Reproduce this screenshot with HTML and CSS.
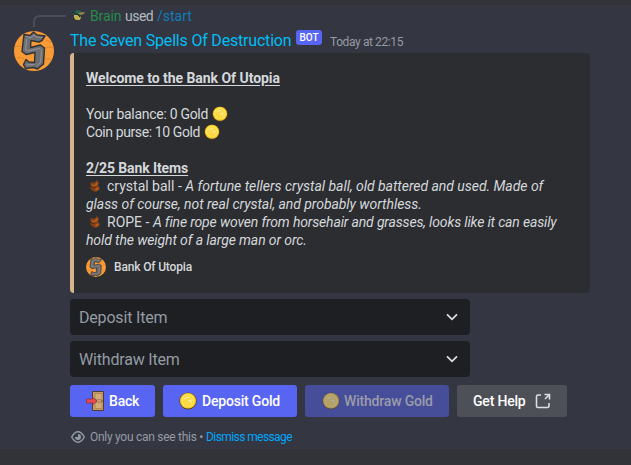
FILE: index.html
```
<!DOCTYPE html>
<html lang="en">
<head>
<meta charset="utf-8">
<title>Bank Of Utopia</title>
<link rel="stylesheet" href="styles.css">
</head>
<body>
<svg class="defs" width="0" height="0" aria-hidden="true">
  <symbol id="logo" viewBox="0 0 40 40">
    <circle cx="20" cy="20" r="20" fill="#f99a35"/>
    <path d="M1 16q5-2 8 0M31 17q5-2 8 0M31 28q4-1 6 1M3 27q4-1 7 1M32 9l5 2" fill="none" stroke="#d98029" stroke-width=".8"/>
    <path d="M10 3.500l6 1 3.500-3.500 3.500 3 8 1-3 4.500-3 1.500-8-1.500-.5 7 10-2.500 4 3-1 16-6 5-4-1.500-8 1-2-4 2.500-5 3 2.500 5.500.5.500-10-9 2-4-3z" fill="#6d6e71" stroke="#303236" stroke-width="1.400" stroke-linejoin="round"/>
    <path d="M12 5.500l5 1 3-2.500 3 2 5 .500M12.500 8l-1 11 2 1 12-2.500 2 2-1 12-3.500 3M12.500 34l8-.500" fill="none" stroke="#96979a" stroke-width="1"/>
  </symbol>
  <symbol id="coin" viewBox="0 0 18 20" preserveAspectRatio="none">
    <ellipse cx="9" cy="10" rx="8.700" ry="9.500" fill="#5a4520"/>
    <ellipse cx="9" cy="9.700" rx="8" ry="8.700" fill="#f9cd32"/>
    <ellipse cx="9" cy="9.500" rx="6.600" ry="7.200" fill="#ffe74f"/>
    <ellipse cx="9" cy="9.700" rx="5.200" ry="5.800" fill="#fcd746"/>
    <path d="M5.500 8q2-3 5-2M9 10l3-1 0 3" fill="none" stroke="#fff09a" stroke-width="1.200"/>
  </symbol>
  <symbol id="bag" viewBox="0 0 12 12">
    <path d="M1 3l3-1 1 1 3-3 2 3-1 2 2 4-4 3-3-1-3-3 1-2z" fill="#82401a"/>
    <path d="M2 4l3 1 3-3 1 2-3 3-3-1zM6 9l3-2 1 2-3 2z" fill="#b45c20"/>
    <path d="M1.500 6.500l3 1 2-1" fill="none" stroke="#54240f"/>
  </symbol>
  <symbol id="chevron" viewBox="0 0 12 8"><path d="M1 1.300l5 5 5-5" fill="none" stroke="#dbdee1" stroke-width="1.800"/></symbol>
</svg>

<article class="message">
  <svg class="spine" width="34" height="12" viewBox="0 0 34 12"><path d="M1 12V7q0-6 6-6h26" fill="none" stroke="#4b4d56" stroke-width="2"/></svg>
  <div class="avatar"><svg width="40" height="40"><use href="#logo"/></svg></div>
  <div class="content">
    <div class="reply">
      <svg width="16" height="16" viewBox="0 0 16 16">
        <path d="M1 3l4 1 2-2 4 1 1 2 3 0-3 2-6 0-3-1z" fill="#296354"/>
        <path d="M8 5l6-1 1 1-4 2z" fill="#a28442"/>
        <path d="M4 7l4 0 3 2-1 3-4 0-2-2z" fill="#c0b04d"/>
        <path d="M2 4l7 3M8 7l2 2" stroke="#132821"/>
      </svg>
      <span class="user">Brain</span><span class="used">used</span><span class="command">/start</span>
    </div>
    <header class="header">
      <span class="name">The Seven Spells Of Destruction</span>
      <span class="bot">BOT</span>
      <time class="time">Today at 22:15</time>
    </header>

    <section class="embed">
      <div class="line title">Welcome to the Bank Of Utopia</div>
      <div class="line blank"></div>
      <div class="line balance">Your balance: 0 Gold<svg class="emoji" width="16" height="16"><use href="#coin"/></svg></div>
      <div class="line purse">Coin purse: 10 Gold<svg class="emoji" width="16" height="16"><use href="#coin"/></svg></div>
      <div class="line blank"></div>
      <div class="line title items">2/25 Bank Items</div>
      <div class="line"><svg class="bag" width="12" height="12"><use href="#bag"/></svg><span class="item">crystal ball -</span><em class="ball">A fortune tellers crystal ball, old battered and used. Made of</em></div>
      <div class="line"><em class="glass">glass of course, not real crystal, and probably worthless.</em></div>
      <div class="line"><svg class="bag" width="12" height="12"><use href="#bag"/></svg><span class="item">ROPE -</span><em class="rope">A fine rope woven from horsehair and grasses, looks like it can easily</em></div>
      <div class="line"><em class="weight">hold the weight of a large man or orc.</em></div>
      <footer class="embed-footer"><svg width="20" height="20"><use href="#logo"/></svg><span>Bank Of Utopia</span></footer>
    </section>

    <div class="selects">
      <div class="select"><span>Deposit Item</span><svg width="12" height="8"><use href="#chevron"/></svg></div>
      <div class="select"><span>Withdraw Item</span><svg width="12" height="8"><use href="#chevron"/></svg></div>
    </div>

    <div class="buttons">
      <button class="button back">
        <svg width="19" height="20" viewBox="0 0 19 20">
          <path d="M6.500 .5h11v19h-11z" fill="#c69d68" stroke="#4c3d36"/>
          <path d="M9 2.500h7v6H9zM9 11.500h7v6H9z" fill="#d3ad79" stroke="#a98252" stroke-width=".8"/>
          <path d="M.5 8h6V6l4.500 4-4.500 4v-2h-6z" fill="#e94950" stroke="#813446" stroke-width=".8"/>
          <circle cx="16" cy="10" r=".8" fill="#594229"/>
        </svg><span>Back</span>
      </button>
      <button class="button deposit"><svg width="18" height="18"><use href="#coin"/></svg><span>Deposit Gold</span></button>
      <button class="button withdraw" disabled><svg width="18" height="18"><use href="#coin"/></svg><span>Withdraw Gold</span></button>
      <button class="button help"><span>Get Help</span>
        <svg width="16" height="16" viewBox="0 0 16 16" fill="none" stroke="#dbdee1" stroke-width="1.600"><path d="M6 2H3Q1.500 2 1.500 3.500v9.500q0 1.500 1.500 1.500h9.500q1.500 0 1.500-1.500v-3M9.500 1.500H14.500v5M14.500 1.500L10 6"/></svg>
      </button>
    </div>

    <div class="notice">
      <svg width="16" height="14" viewBox="0 0 16 14"><path d="M1.700 7Q4.500 1.800 8 1.800T14.300 7Q11.500 12.200 8 12.200T1.700 7z" fill="none" stroke="#949ba4" stroke-width="1.500"/><path d="M8 4v3H5a3 3 0 1 0 3-3z" fill="#949ba4"/></svg>
      <span class="private">Only you can see this •</span><a class="dismiss">Dismiss message</a>
    </div>
  </div>
</article>
</body>
</html>
```
FILE: styles.css
```
* { box-sizing: border-box; }
body {
  margin: 0;
  padding-top: 5px;
  height: 465px;
  overflow: hidden;
  background: #313338;
  color: #d5d8db;
  font: 14px/18px Roboto, "Noto Sans", sans-serif;
  white-space: nowrap;
}
svg { display: block; flex: none; }
.defs { position: absolute; }
.message {
  position: relative;
  display: flex;
  height: 444px;
  padding-left: 14px;
  background: #343641;
}
.spine { position: absolute; left: 33px; top: 10px; }
.avatar { width: 56px; padding-top: 26px; }
.content { width: 520px; padding-top: 2px; }

.reply { display: flex; align-items: center; height: 18px; }
.reply svg { margin-right: 4px; }
.user { width: 35px; color: #248c4c; letter-spacing: -.1px; }
.used { width: 32px; color: #b5bac1; letter-spacing: -.5px; }
.command { color: #127cb8; }

.header { display: flex; align-items: center; height: 22px; margin-top: 4px; }
.name { width: 226px; padding-top: 2px; color: #00bef5; font-size: 16px; letter-spacing: -.19px; line-height: 22px; }
.bot {
  width: 26px;
  height: 15px;
  margin-top: -5px;
  border-radius: 3px;
  background: #5865f2;
  color: #fff;
  font-size: 10px;
  font-weight: 500;
  line-height: 16px;
  text-align: center;
}
.time { margin: 4px 0 0 8px; color: #949ba4; font-size: 12px; letter-spacing: -.4px; }

.embed {
  height: 240px;
  margin-top: 2px;
  padding: 16px 12px;
  border-left: 4px solid #d5b58e;
  border-radius: 4px;
  background: #2b2d31;
}
.line { display: flex; align-items: center; height: 18px; }
.title { font-weight: 700; letter-spacing: -.05px; text-decoration: underline; text-underline-offset: 2px; }
.items { letter-spacing: -.11px; }
.balance { letter-spacing: -.29px; }
.purse { letter-spacing: -.4px; }
.emoji { margin-left: 4px; }
.bag { margin: 0 6px 0 3px; }
.item { margin-right: 3.5px; }
.ball { letter-spacing: -.035px; }
.glass { letter-spacing: -.055px; }
.rope { letter-spacing: -.16px; }
.weight { letter-spacing: -.11px; }
.embed-footer {
  display: flex;
  align-items: center;
  gap: 8px;
  margin-top: 8px;
  font-size: 12px;
  font-weight: 500;
  letter-spacing: -.16px;
}

.selects { display: grid; gap: 6px; width: 400px; margin-top: 6px; }
.select {
  display: flex;
  align-items: center;
  justify-content: space-between;
  height: 36px;
  padding: 0 12px 0 9px;
  border-radius: 4px;
  background: #1e1f22;
  color: #949ba4;
  font-size: 16px;
  letter-spacing: -.18px;
}
.select span { padding-top: 2px; }

.buttons { display: flex; gap: 8px; margin-top: 8px; }
.button {
  display: flex;
  align-items: center;
  height: 32px;
  padding: 0 16px;
  border: 0;
  border-radius: 3px;
  background: #5865f2;
  color: #fff;
  font: 500 14px/18px Roboto, "Noto Sans", sans-serif;
  letter-spacing: -.19px;
}
.back { width: 85px; gap: 4px; }
.deposit { width: 134px; gap: 5px; }
.withdraw { width: 144px; gap: 4px; background: #464d99; color: #9a9ca9; padding-left: 17px; }
.withdraw svg { opacity: .6; }
.help { width: 110px; gap: 9px; background: #4e5058; }

.notice { display: flex; align-items: center; height: 18px; margin-top: 11px; color: #949ba4; font-size: 12px; }
.notice svg { margin-right: 4px; }
.private { width: 116px; letter-spacing: -.28px; }
.dismiss { color: #00a8fc; letter-spacing: -.58px; }
```
